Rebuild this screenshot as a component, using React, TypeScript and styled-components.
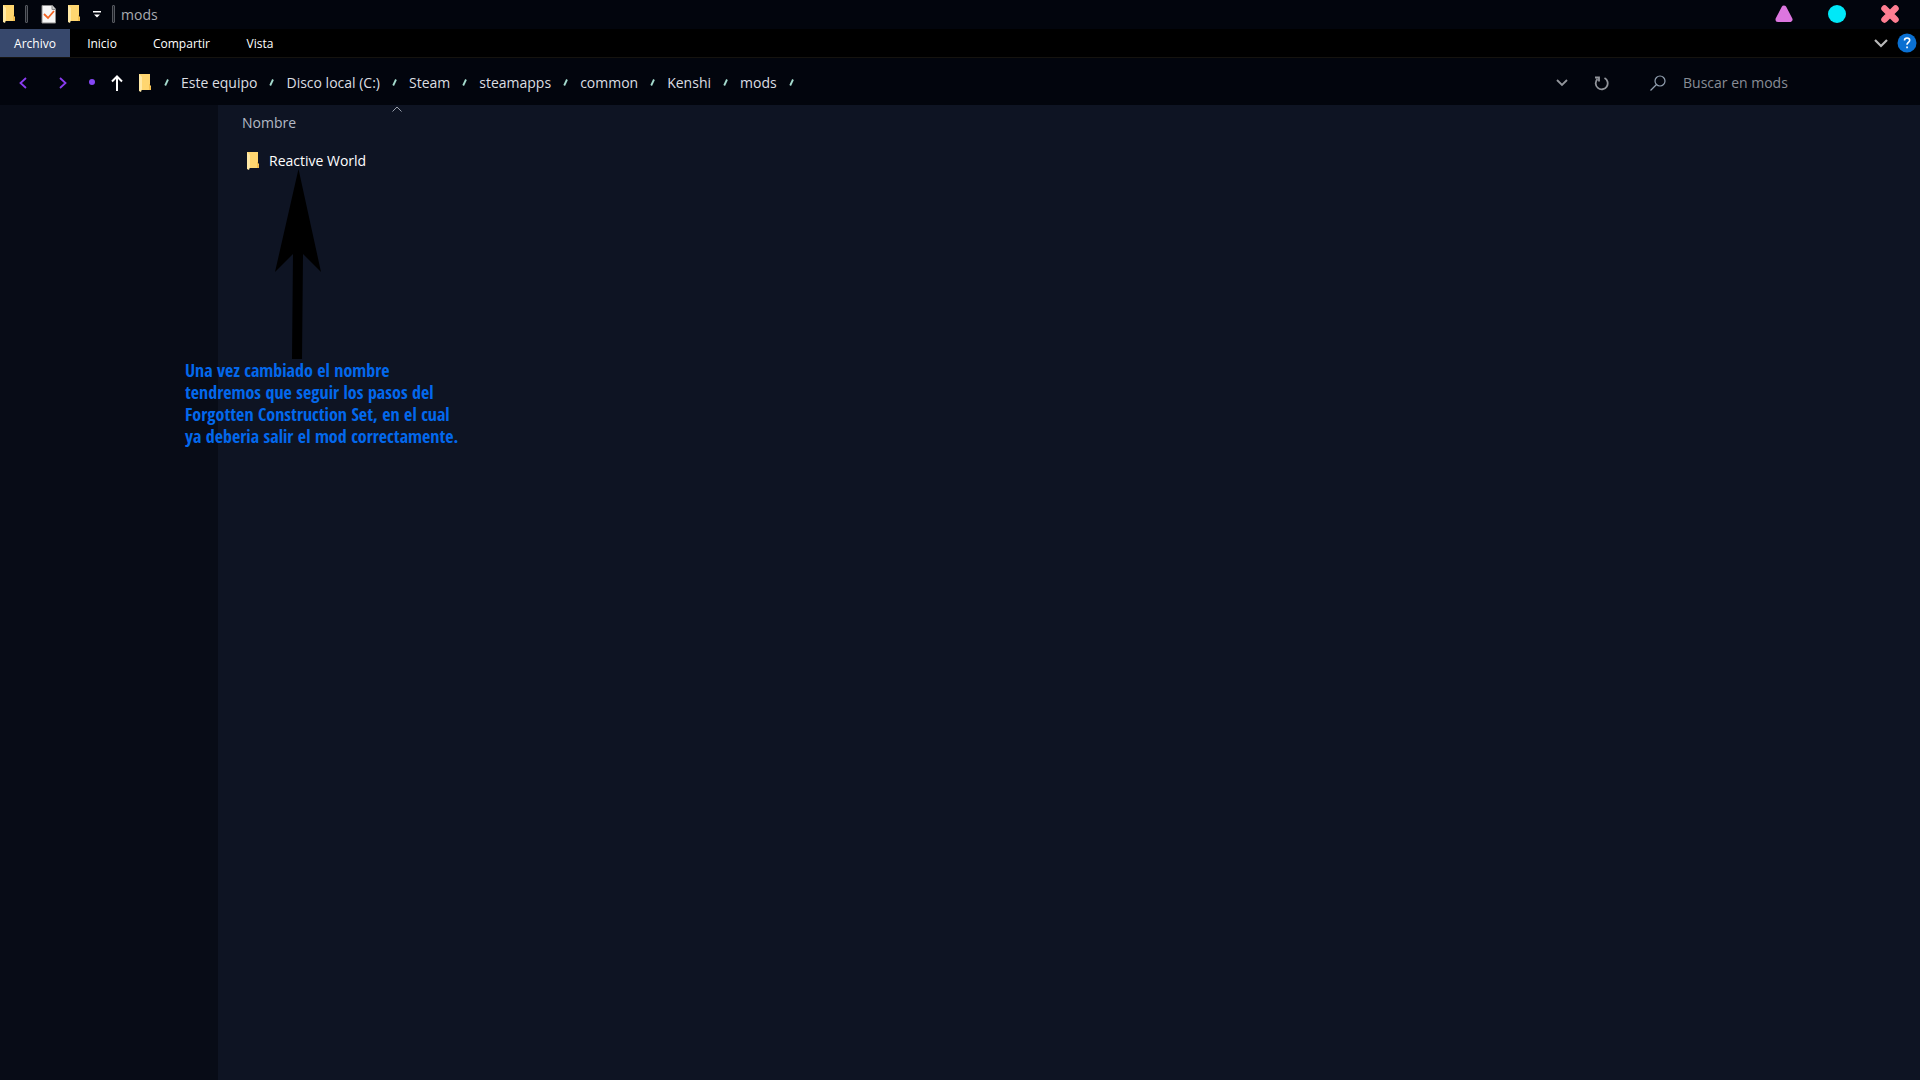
import React from "react";
import styled, { createGlobalStyle } from "styled-components";

const Global = createGlobalStyle`
  * { box-sizing: border-box; }
  body { margin: 0; background: #0e1423; color: #fff; font-family: "Open Sans", "Noto Sans", sans-serif; }
  button, input { font-family: inherit; }
`;

const Window = styled.div`
  position: relative;
  display: flex;
  flex-direction: column;
  min-height: 100vh;
`;
const TitleBar = styled.header`
  display: flex;
  align-items: center;
  height: 29px;
  background: #02050d;
  padding-right: 4px;
  padding-bottom: 1px;
`;
const IconSlot = styled.span<{ $w: number }>`
  display: flex;
  align-items: center;
  justify-content: center;
  width: ${(p) => p.$w}px;
  flex: none;
`;
const IconButton = styled.button<{ $w: number }>`
  display: flex;
  align-items: center;
  justify-content: center;
  width: ${(p) => p.$w}px;
  flex: none;
  height: 28px;
  padding: 0;
  border: 0;
  background: none;
  color: inherit;
`;
const Divider = styled.span`
  width: 3px;
  height: 18px;
  border: 1px solid #55585f;
  border-radius: 1px;
  background: #1c1f26;
`;
const Title = styled.h1`
  margin: 0;
  padding: 2px 0 0 2px;
  font-size: 14px;
  line-height: 24px;
  font-weight: 400;
  color: #a9abb0;
`;
const Spacer = styled.div`
  flex: 1;
`;
const Ribbon = styled.nav`
  display: flex;
  align-items: center;
  height: 29px;
  background: #000;
  border-bottom: 1px solid #15130f;
`;
const Tab = styled.button<{ $active?: boolean; $w: number }>`
  width: ${(p) => p.$w}px;
  height: 28px;
  padding: 1px 0 0;
  border: 0;
  background: ${(p) => (p.$active ? "#37486c" : "transparent")};
  color: #fff;
  font-size: 12px;
  line-height: 27px;
`;
const AddressBar = styled.div`
  display: flex;
  align-items: center;
  height: 47px;
  padding-top: 3px;
  padding-left: 4px;
  background: #02050d;
  color: #92959b;
`;
const Crumbs = styled.ol`
  display: flex;
  align-items: center;
  margin: 0;
  padding: 0 0 0 8px;
  list-style: none;
`;
const Crumb = styled.li`
  display: flex;
  align-items: center;
`;
const CrumbLink = styled.a`
  padding-left: 12px;
  padding-right: 12px;
  color: #dcdee2;
  font-size: 14px;
  line-height: 24px;
  text-decoration: none;
`;
const SearchLabel = styled.label`
  display: flex;
  align-items: center;
  gap: 7px;
  margin-left: 19px;
`;
const SearchBox = styled.input`
  width: 237px;
  padding: 0;
  border: 0;
  outline: 0;
  background: none;
  color: #dcdee2;
  font-size: 14px;
  line-height: 24px;
  &::placeholder { color: #888d96; opacity: 1; }
`;
const Body = styled.div`
  display: flex;
  flex: 1;
`;
const Sidebar = styled.aside`
  width: 218px;
  flex: none;
  background: #080c17;
`;
const FilePane = styled.main`
  flex: 1;
  padding-left: 22px;
  background: #0e1423;
`;
const Files = styled.table`
  border-collapse: collapse;
  text-align: left;
  font-size: 14px;
  line-height: 24px;
`;
const HeadCell = styled.th`
  position: relative;
  width: 350px;
  padding: 6px 2px;
  font-weight: 400;
  color: #b4bac6;
`;
const SortMark = styled.svg`
  position: absolute;
  top: 1px;
  left: 152px;
`;
const NameCell = styled.td`
  padding: 8px 6px;
`;
const FileName = styled.a`
  display: flex;
  align-items: center;
  gap: 9px;
  color: #fff;
  text-decoration: none;
`;
const Note = styled.figure`
  position: absolute;
  top: 169px;
  left: 185px;
  margin: 0;
`;
const Arrow = styled.svg`
  display: block;
  margin-left: 88px;
`;
const NoteText = styled.figcaption`
  color: #0368ec;
  font-family: "Open Sans Condensed", "Open Sans", sans-serif;
  font-weight: 700;
  font-size: 18px;
  line-height: 22px;
  white-space: nowrap;
`;

const Folder = () => (
  <svg width="14" height="18" viewBox="0 0 14 18" aria-hidden="true">
    <path d="M1 0h11v11l1 1v4H1z" fill="#ffd670" />
    <path d="M11 10h1v2l1 1v3h-2z" fill="#f5bf4f" />
    <path d="M1 0l3 3v12l-1 3-2-1z" fill="#ffe9a6" />
  </svg>
);
const Checklist = () => (
  <svg width="16" height="19" viewBox="0 0 16 19" aria-hidden="true">
    <path d="M1 .5h10.500l3 3.500v14H1z" fill="#f6f6f6" stroke="#8d8d8d" />
    <path d="M11 1v3.500h3.500" fill="#ccc" stroke="#8d8d8d" />
    <path d="M3 9l4 4 6-7" fill="none" stroke="#f26322" strokeWidth="1.800" />
  </svg>
);
const Slash = () => (
  <svg width="5" height="8" viewBox="0 0 5 8" aria-hidden="true">
    <path d="M4 .5L1.200 6.500" stroke="#a5dccf" strokeWidth="1.800" />
  </svg>
);
type ChevronProps = { d: string; color: string; w: number; h: number; stroke?: number };
const Chevron = ({ d, color, w, h, stroke = 1.8 }: ChevronProps) => (
  <svg width={w} height={h} viewBox={`0 0 ${w} ${h}`} fill="none" stroke={color} strokeWidth={stroke} aria-hidden="true">
    <path d={d} />
  </svg>
);

const path = ["Este equipo", "Disco local (C:)", "Steam", "steamapps", "common", "Kenshi", "mods"];
const tabs = [
  { label: "Archivo", w: 70 },
  { label: "Inicio", w: 64 },
  { label: "Compartir", w: 95 },
  { label: "Vista", w: 62 },
];
const note = [
  "Una vez cambiado el nombre",
  "tendremos que seguir los pasos del",
  "Forgotten Construction Set, en el cual",
  "ya deberia salir el mod correctamente.",
];

export default function App() {
  return (
    <>
      <Global />
      <Window>
        <TitleBar>
          <IconSlot $w={18}><Folder /></IconSlot>
          <IconSlot $w={17}><Divider /></IconSlot>
          <IconButton $w={28} aria-label="Propiedades"><Checklist /></IconButton>
          <IconButton $w={22} aria-label="Nueva carpeta"><Folder /></IconButton>
          <IconButton $w={23} aria-label="Personalizar">
            <svg width="8" height="7" viewBox="0 0 8 7" fill="#fff"><path d="M0 0h8v1.500H0zM1 3.500h6L4 6.500z" /></svg>
          </IconButton>
          <IconSlot $w={11}><Divider /></IconSlot>
          <Title>mods</Title>
          <Spacer />
          <IconButton $w={53} aria-label="Minimizar">
            <svg width="18" height="18" viewBox="0 0 18 18"><path d="M9 3L15 14.500H3z" fill="#dc76df" stroke="#dc76df" strokeWidth="5" strokeLinejoin="round" /></svg>
          </IconButton>
          <IconButton $w={53} aria-label="Maximizar">
            <svg width="18" height="18" viewBox="0 0 18 18"><circle cx="9" cy="9" r="9" fill="#00e8f8" /></svg>
          </IconButton>
          <IconButton $w={53} aria-label="Cerrar">
            <svg width="18" height="18" viewBox="0 0 18 18"><path d="M3.500 3.500l11 11M14.500 3.500l-11 11" stroke="#ff7e92" strokeWidth="6.500" strokeLinecap="round" /></svg>
          </IconButton>
        </TitleBar>
        <Ribbon>
          {tabs.map((t, i) => (
            <Tab key={t.label} $w={t.w} $active={i === 0}>{t.label}</Tab>
          ))}
          <Spacer />
          <IconButton $w={26} aria-label="Expandir">
            <Chevron w={14} h={9} d="M1 1l6 6 6-6" color="#b9b9b9" stroke={2.2} />
          </IconButton>
          <IconButton $w={26} aria-label="Ayuda">
            <svg width="20" height="20" viewBox="0 0 20 20">
              <circle cx="10" cy="10" r="9.500" fill="#0a70d2" />
              <path d="M7.500 7.500q0-2.500 2.600-2.500t2.600 2.300q0 1.200-1.400 2.200t-1.300 2.300" fill="none" stroke="#fff" strokeWidth="1.600" />
              <path d="M9.200 13.500h1.700v1.700H9.200z" fill="#fff" />
            </svg>
          </IconButton>
        </Ribbon>
        <AddressBar>
          <IconButton $w={38} aria-label="Atrás"><Chevron w={8} h={12} d="M7 1L1.500 6 7 11" color="#8a3cf0" /></IconButton>
          <IconButton $w={42} aria-label="Adelante"><Chevron w={8} h={12} d="M1 1l5.500 5L1 11" color="#8a3cf0" /></IconButton>
          <IconButton $w={16} aria-label="Recientes">
            <svg width="6" height="8" viewBox="0 0 6 8"><circle cx="3" cy="3" r="3" fill="#8547f5" /></svg>
          </IconButton>
          <IconButton $w={34} aria-label="Subir">
            <Chevron w={12} h={16} d="M1 6.500l5-5 5 5M6 2v14" color="#fff" stroke={2} />
          </IconButton>
          <IconSlot $w={22}><Folder /></IconSlot>
          <Crumbs>
            <Crumb aria-hidden="true"><Slash /></Crumb>
            {path.map((p) => (
              <Crumb key={p}><CrumbLink href="#">{p}</CrumbLink><Slash /></Crumb>
            ))}
          </Crumbs>
          <Spacer />
          <IconButton $w={38} aria-label="Historial"><Chevron w={12} h={8} d="M1 1l5 5 5-5" color="#92959b" /></IconButton>
          <IconButton $w={40} aria-label="Actualizar">
            <svg width="15" height="15" viewBox="0 0 15 15" fill="none" stroke="#92959b" strokeWidth="1.800">
              <path d="M10.500 2A6 6 0 1 1 3.500 3M1 1.500h4v4" />
            </svg>
          </IconButton>
          <SearchLabel>
            <IconSlot $w={36}>
              <svg width="16" height="16" viewBox="0 0 16 16" fill="none" stroke="#92a0b0" strokeWidth="1.200">
                <circle cx="10" cy="6" r="5" /><path d="M6.500 9.500L.500 15.500" />
              </svg>
            </IconSlot>
            <SearchBox type="search" aria-label="Buscar" placeholder="Buscar en mods" />
          </SearchLabel>
        </AddressBar>
        <Body>
          <Sidebar />
          <FilePane>
            <Files>
              <thead>
                <tr>
                  <HeadCell>
                    Nombre
                    <SortMark width="10" height="6" viewBox="0 0 10 6" fill="none" stroke="#9aa0ac" aria-hidden="true"><path d="M.500 5.500l4.500-4.500 4.500 4.500" /></SortMark>
                  </HeadCell>
                </tr>
              </thead>
              <tbody>
                <tr>
                  <NameCell><FileName href="#"><Folder />Reactive World</FileName></NameCell>
                </tr>
              </tbody>
            </Files>
          </FilePane>
        </Body>
        <Note>
          <Arrow width="50" height="190" viewBox="0 0 50 190" aria-hidden="true">
            <path d="M25.500 0L48 103 30 85 29 190H19L20 85 2 103z" fill="#000" />
          </Arrow>
          <NoteText>
            {note.map((line) => <div key={line}>{line}</div>)}
          </NoteText>
        </Note>
      </Window>
    </>
  );
}
